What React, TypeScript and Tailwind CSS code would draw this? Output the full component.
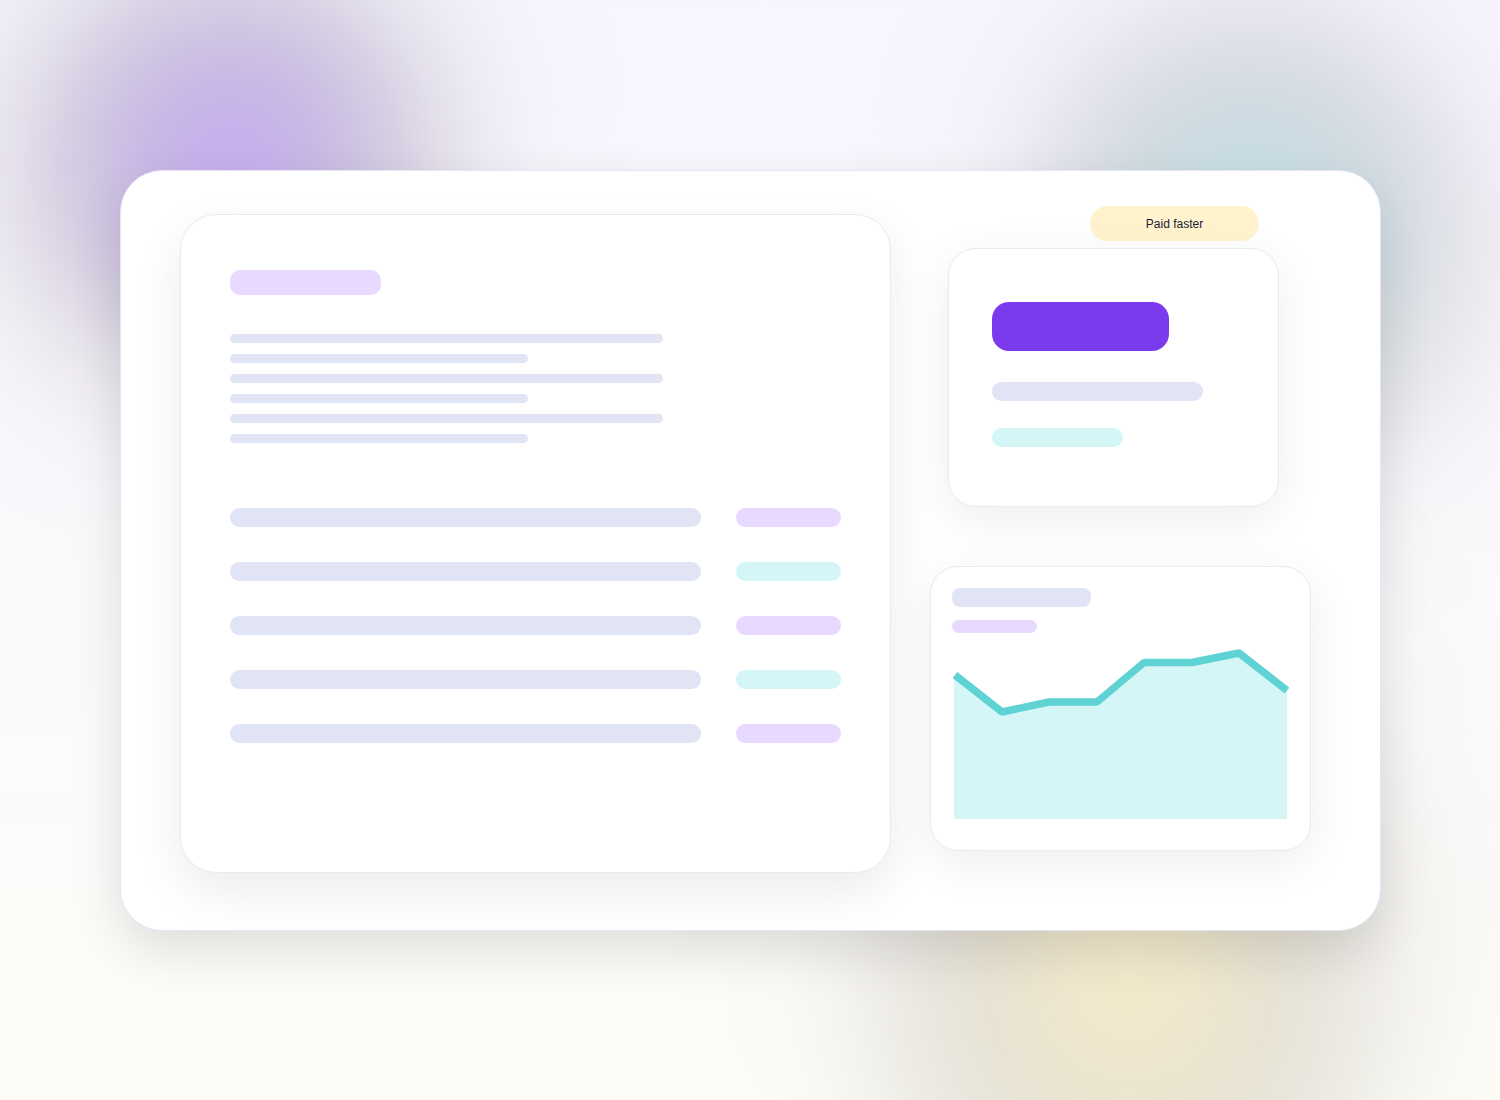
import React from 'react';

// Falloff of a soft disc, sampled every 10% from its centre to its rim
const FALLOFF = [0.865, 0.831, 0.731, 0.576, 0.397, 0.232, 0.114, 0.045, 0.016, 0.005, 0];

const glow = (r: number, g: number, b: number, alpha: number) => {
  const stops = FALLOFF.map((f, i) => {
    const rgb = [r, g, b].map((c) => Math.round(c * f)).join(' ');
    return `rgb(${rgb} / ${(alpha * f).toFixed(3)}) ${i * 10}%`;
  });
  return { backgroundImage: `radial-gradient(closest-side, ${stops.join(', ')})` };
};

const Bar = ({ className }: { className: string }) => <div className={`max-w-full ${className}`} />;

const paragraph = ['w-[433px]', 'w-[298px]', 'w-[433px]', 'w-[298px]', 'w-[433px]', 'w-[298px]'];
const rows = ['bg-[#e7d9ff]', 'bg-[#d4f6f6]', 'bg-[#e7d9ff]', 'bg-[#d4f6f6]', 'bg-[#e7d9ff]'];

const Backdrop = () => (
  <div className="absolute inset-0 overflow-hidden pointer-events-none" aria-hidden="true">
    <div className="absolute -left-[200px] -top-[270px] h-[880px] w-[860px]" style={glow(124, 58, 237, 0.41)} />
    <div className="absolute left-[820px] -top-[210px] h-[900px] w-[860px]" style={glow(95, 205, 205, 0.36)} />
    <div className="absolute left-[650px] top-[340px] h-[1240px] w-[960px]" style={glow(255, 222, 118, 0.35)} />
  </div>
);

const DocumentCard = () => (
  <div className="mt-2 min-w-0 flex-1 rounded-[36px] border border-[#e9e9f6] bg-white px-[49px] pt-[55px] pb-[129px] shadow-[0_18px_48px_rgba(0,0,0,0.08)]">
    <Bar className="h-[25px] w-[151px] rounded-[10px] bg-[#e7d9ff]" />
    <div className="mt-[39px] flex flex-col gap-[11px]">
      {paragraph.map((width, i) => (
        <Bar key={i} className={`h-[9px] rounded-full bg-[#e0e4f5] ${width}`} />
      ))}
    </div>
    <div className="mt-[65px] flex flex-col gap-[35px]">
      {rows.map((tone, i) => (
        <div key={i} className="flex gap-[35px]">
          <Bar className="h-[19px] flex-1 rounded-full bg-[#e0e4f5]" />
          <Bar className={`h-[19px] w-[105px] rounded-full ${tone}`} />
        </div>
      ))}
    </div>
  </div>
);

const PaymentCard = () => (
  <div className="mt-[7px] mr-8 ml-[18px] rounded-[28px] border border-[#e9e9f6] bg-white px-[43px] pt-[53px] pb-[59px] shadow-[0_12px_48px_rgba(0,0,0,0.07)]">
    <Bar className="h-[49px] w-[177px] rounded-[17px] bg-[#7c3aed]" />
    <Bar className="mt-[31px] h-[19px] w-[211px] rounded-full bg-[#e0e4f5]" />
    <Bar className="mt-[27px] h-[19px] w-[131px] rounded-full bg-[#d4f6f6]" />
  </div>
);

const ChartCard = () => (
  <div className="mt-[59px] rounded-[28px] border border-[#e9e9f6] bg-white px-[21px] pt-[21px] pb-[31px] shadow-[0_12px_48px_rgba(0,0,0,0.07)]">
    <Bar className="h-[19px] w-[139px] rounded-lg bg-[#e0e4f5]" />
    <Bar className="mt-[13px] h-[13px] w-[85px] rounded-full bg-[#e7d9ff]" />
    <svg viewBox="0 0 337 174" className="mt-3 block w-full" fill="none">
      <path d="M2 30 50 67 97 57H145L192 17.5H240L287 8 335 45V174H2Z" fill="#d4f6f6" />
      <path
        d="M3 30 50 67 97 57H145L192 17.5H240L287 8 335 45.5"
        stroke="#5fd3d3"
        strokeWidth="7.5"
        strokeLinejoin="bevel"
      />
    </svg>
  </div>
);

const App = () => {
  return (
    <main className="relative min-h-screen bg-linear-to-b from-[#f8f5ff] to-[#fefdf8] pt-[170px] pr-[119px] pb-[169px] pl-[120px] font-['Liberation_Sans',sans-serif]">
      <Backdrop />
      <section className="relative flex items-start gap-[39px] rounded-[42px] border border-[#e4e6f5] bg-white pt-[35px] pr-[69px] pb-[57px] pl-[59px] shadow-[0_20px_52px_rgba(0,0,0,0.12)]">
        <DocumentCard />
        <div className="flex w-[381px] shrink-0 flex-col">
          <span className="mr-[52px] flex h-[35px] w-[169px] items-center justify-center self-end rounded-full bg-[#fff3cd] text-xs text-[#1e1b3a]">
            Paid faster
          </span>
          <PaymentCard />
          <ChartCard />
        </div>
      </section>
    </main>
  );
};

export default App;
